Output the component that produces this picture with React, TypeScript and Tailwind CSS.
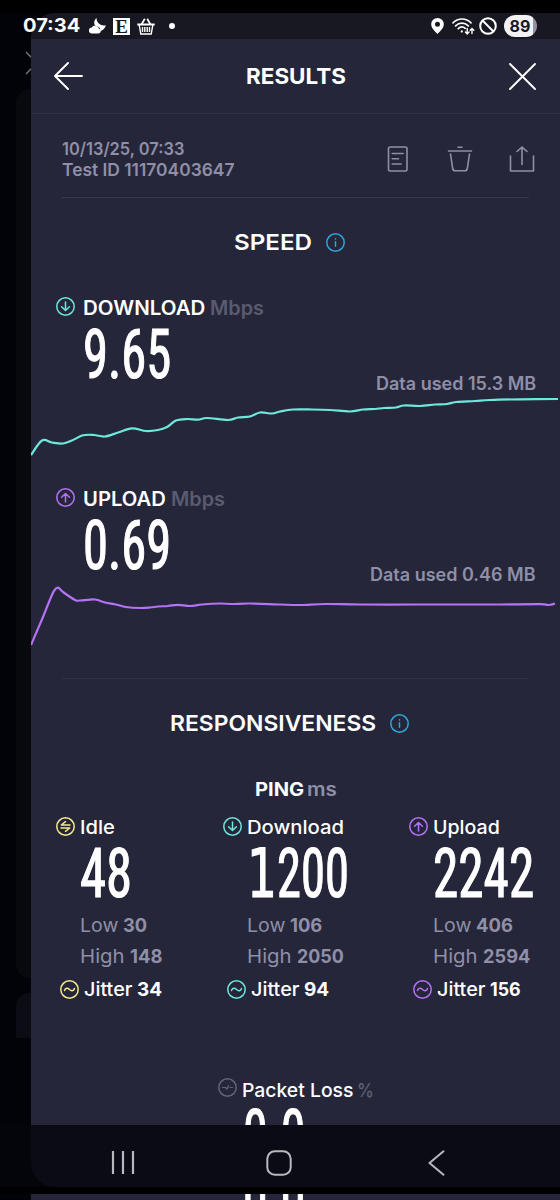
import { useLayoutEffect, useRef, type ReactNode } from 'react'

type Point = [number, number]

const downloadPoints: Point[] = [
  [31, 455], [42, 440.5], [52, 442.5], [63, 443.5], [72, 440.5], [83, 435.3], [94, 435], [105, 436.5],
  [118, 432.5], [132, 428.3], [146, 431], [158, 430], [167, 427], [176, 420.5], [187, 419], [198, 419.7],
  [207, 418], [228, 420], [238, 417.5], [250, 416.5], [260, 412.5], [272, 413.5], [280, 411.5],
  [293, 409.5], [312, 409.5], [330, 410], [350, 411.5], [363, 409.5], [375, 409], [384, 408],
  [396, 407.5], [404, 405.5], [420, 406], [435, 404.5], [447, 404], [456, 402], [475, 401],
  [490, 400], [520, 399.3], [558, 399],
]

const uploadPoints: Point[] = [
  [31, 645], [37, 631], [43, 617], [49, 602], [54, 590.8], [58, 587.7], [63, 592], [75, 600],
  [80, 600.5], [95, 599.5], [105, 602.5], [116, 604.5], [126, 607], [140, 608], [150, 607.5],
  [158, 606.5], [168, 606], [178, 604.8], [190, 606], [202, 604.5], [220, 603.5], [232, 604],
  [250, 603.5], [280, 604.5], [300, 605], [325, 604], [360, 604.5], [415, 604.5], [460, 604.5],
  [500, 604.5], [540, 604.2], [549, 605], [555, 603.5],
]

const pings = [
  {
    label: 'Idle', labelW: 'w-[35px]', value: '48', valueW: 'w-[52px]', color: '#f5ea8c', icon: 'idle',
    low: '30', lowW: 'w-[24px]', high: '148', highW: 'w-[32px]', jitter: '34', jitterW: 'w-[25px]',
  },
  {
    label: 'Download', labelW: 'w-[97px]', value: '1200', valueW: 'w-[102px]', color: '#6de8dc', icon: 'down',
    low: '106', lowW: 'w-[32px]', high: '2050', highW: 'w-[47px]', jitter: '94', jitterW: 'w-[25px]',
  },
  {
    label: 'Upload', labelW: 'w-[67px]', value: '2242', valueW: 'w-[101px]', color: '#b472f5', icon: 'up',
    low: '406', lowW: 'w-[37px]', high: '2594', highW: 'w-[47px]', jitter: '156', jitterW: 'w-[31px]',
  },
]

function smooth(points: Point[]) {
  let d = `M${points[0][0]} ${points[0][1]}`
  for (let i = 0; i < points.length - 1; i++) {
    const a = points[i - 1] ?? points[i]
    const b = points[i]
    const c = points[i + 1]
    const e = points[i + 2] ?? c
    d += `C${b[0] + (c[0] - a[0]) / 6} ${b[1] + (c[1] - a[1]) / 6} ${c[0] - (e[0] - b[0]) / 6} ${c[1] - (e[1] - b[1]) / 6} ${c[0]} ${c[1]}`
  }
  return d
}

// Stretches its text horizontally so it fills the width of the box
function Fit({ className, children }: { className: string; children: ReactNode }) {
  const box = useRef<HTMLSpanElement>(null)
  const text = useRef<HTMLSpanElement>(null)

  useLayoutEffect(() => {
    if (!box.current || !text.current) return
    text.current.style.transform = `scaleX(${box.current.clientWidth / text.current.offsetWidth})`
  }, [])

  return (
    <span ref={box} className={`block shrink-0 whitespace-nowrap ${className}`}>
      <span ref={text} className="inline-block origin-left">{children}</span>
    </span>
  )
}

function Big({ className, children }: { className: string; children: string }) {
  const rest = children.startsWith('1') ? children.slice(1) : children
  return (
    <Fit
      className={`h-14 font-[Roboto_Condensed,Roboto,sans-serif] text-[69px] leading-[58px] font-normal text-white [-webkit-text-stroke:1.2px_white] ${className}`}
    >
      {/* a leading 1 takes a face that draws its foot */}
      {rest !== children && <span className="font-[DejaVu_Sans,sans-serif] text-[67px] leading-[0]">1</span>}
      {rest}
    </Fit>
  )
}

function CircleIcon({ icon, color, className = '' }: { icon: string; color: string; className?: string }) {
  return (
    <svg
      className={`size-[19px] shrink-0 ${className}`}
      viewBox="0 0 19 19"
      fill="none"
      stroke={color}
      strokeWidth="1.5"
      strokeLinecap="round"
      strokeLinejoin="round"
    >
      <circle cx="9.5" cy="9.5" r="8.7" />
      {icon === 'down' && <path d="M9.5 5v8.3M5.6 9.8l3.9 3.7 3.9-3.7" />}
      {icon === 'up' && <path d="M9.5 14V5.7M5.6 9.2l3.9-3.7 3.9 3.7" />}
      {icon === 'idle' && <path d="M14 8H5.300l4.200-3.300M5 11h8.700l-4.200 3.300" />}
      {icon === 'wave' && <path d="M4.500 10.600c1-2.800 3.200-2.800 5-1.100s4 1.700 5-1.100" />}
      {icon === 'loss' && <path strokeWidth="1.2" d="M4.5 9.5h3l1.5 1.7 1.6-3.7M12 9.5h2.5" />}
      {icon === 'info' && <path d="M9.5 8.700v4.600M9.5 5.800v.2" />}
    </svg>
  )
}

function SectionTitle({ className, children }: { className: string; children: string }) {
  return (
    <div className="mr-[13px] flex h-[89px] items-center justify-center">
      <Fit className={`text-[22px] leading-[27px] font-semibold text-white ${className}`}>{children}</Fit>
      <CircleIcon icon="info" color="#2fa5dc" className="ml-[14px]" />
    </div>
  )
}

type SpeedProps = {
  label: string
  labelW: string
  value: string
  used: string
  usedW: string
  icon: string
  color: string
  points: Point[]
  viewBox: string
}

function Speed({ label, labelW, value, used, usedW, icon, color, points, viewBox }: SpeedProps) {
  return (
    <section>
      <div className="flex h-6 items-center pl-[25px] text-[19.5px] leading-6 font-semibold">
        <CircleIcon icon={icon} color={color} className="mb-1" />
        <Fit className={`ml-2 text-white ${labelW}`}>{label}</Fit>
        <Fit className="ml-[5px] w-[54px] text-[#5b5b70]">Mbps</Fit>
      </div>
      <Big className="mt-[6px] ml-[52px] w-[88px]">{value}</Big>
      <div className="-mt-2 flex h-5 justify-end pr-6 text-[18px] leading-5 font-semibold text-[#8f8fa8]">
        <Fit className={usedW}>{used}</Fit>
      </div>
      <svg className="block h-[66px] w-full" viewBox={viewBox} fill="none">
        <path d={smooth(points)} stroke={color} strokeWidth="2.2" strokeLinejoin="round" />
      </svg>
    </section>
  )
}

function StatusBar() {
  return (
    <div className="relative h-[26px] bg-[#020308]">
      <div className="absolute inset-y-0 right-0 left-[31px] rounded-tl-[24px] bg-[#171821]" />
      <div className="relative flex h-full items-center pr-[23px] pl-[23px] text-white">
        <Fit className="w-[57px] text-[19px] leading-6 font-bold">07:34</Fit>
        <svg className="ml-[9px] h-4 w-[17px]" viewBox="0 0 17 16" fill="currentColor">
          <path d="M7.500 0c0 2.800 1.300 5.300 3.600 6.500 2 1 4 1.300 5.900.8-1 3-3 5-5.700 6 .3-2.600-1.200-4.700-3.800-5.200C6 7.600 5.200 6.600 5.200 5c0-2 .9-3.900 2.300-5z" />
          <path d="M3 15.500a3 3 0 0 1-.2-6 3.900 3.900 0 0 1 7.200 1.300 2.400 2.400 0 0 1-.3 4.700z" />
        </svg>
        <span className="ml-[7px] flex size-[17px] items-center justify-center bg-white font-[Liberation_Serif,serif] text-[19px] leading-none font-bold text-[#171821]">
          E
        </span>
        <svg className="ml-[7px] h-[17px] w-[18px]" viewBox="0 0 18 17" fill="none" stroke="currentColor">
          <path d="M.3 6.500h17.400" strokeWidth="2" />
          <path d="M4.500 6.500 7.800.8M13.500 6.500 10.200.8" strokeWidth="1.700" />
          <path d="M2.200 7l1.600 9h10.400l1.600-9M5.500 9v5M7.800 9v5M10.200 9v5M12.500 9v5" strokeWidth="1.400" />
        </svg>
        <span className="ml-[14px] size-[6px] rounded-full bg-white" />

        <svg className="ml-auto h-4 w-[13px]" viewBox="0 0 13 16" fill="currentColor">
          <path fillRule="evenodd" d="M6.500 0A6.300 6.300 0 0 0 .2 6.300C.2 10 3.500 13 6.500 16c3-3 6.300-6 6.300-9.700A6.300 6.300 0 0 0 6.500 0zm0 3.800a2.500 2.500 0 1 1 0 5 2.500 2.500 0 0 1 0-5z" />
        </svg>
        <svg className="ml-2 h-[17px] w-[23px]" viewBox="0 0 23 17" fill="none" stroke="currentColor" strokeWidth="1.700" strokeLinecap="round">
          <path d="M1 4.800C6-.3 14-.3 19 4.800M3.600 7.800c3.700-3.600 9-3.600 12.700 0M6.300 10.700c2-2 4.800-2.100 6.900-.4" />
          <path d="M9.800 13.400v.2" strokeWidth="2.200" />
          <path d="M15.200 10.500v5.300m-1.800-1.700 1.800 1.800 1.800-1.800M20 15.500v-5m-1.800 1.700 1.800-1.800 1.800 1.800" strokeWidth="1.400" />
        </svg>
        <svg className="ml-1 size-[18px]" viewBox="0 0 18 18" fill="none" stroke="currentColor" strokeWidth="2">
          <circle cx="9" cy="9" r="7.800" />
          <path d="m3.500 3.500 11 11" />
        </svg>
        <span className="ml-[7px] flex h-[22px] w-[33px] items-center rounded-full bg-linear-to-r from-[#f2f2f5] from-88% to-[#9293a0] to-88% pl-[5.500px] font-bold text-[#171821]">
          <Fit className="w-[21px] text-[16px] leading-5">89</Fit>
        </span>
      </div>
    </div>
  )
}

export default function App() {
  return (
    <main className="flex h-[1200px] w-[560px] flex-col overflow-hidden bg-black pt-[13px] font-[Inter,sans-serif]">
      <StatusBar />

      <div className="flex h-[1086px] overflow-hidden">
        {/* previous screen showing behind the panel */}
        <aside className="w-[31px] shrink-0 overflow-hidden bg-[#020308] pl-4">
          <svg className="mt-3 ml-[10px] h-[24px] w-[5px]" viewBox="0 0 5 24" fill="none" stroke="#77777d" strokeWidth="1.300">
            <path d="M0 1l6 6M0 23l6-6" />
          </svg>
          <div className="mt-[14px] h-[889px] w-10 rounded-l-[14px] bg-[#08090d]" />
          <div className="mt-[15px] h-[45px] w-10 rounded-tl-[14px] bg-[#0c0c14]" />
        </aside>

        <div className="w-[529px] shrink-0 bg-[#252639]">
          <header className="flex h-[75px] items-center justify-between border-b border-[#303145] pr-[24px] pl-[23px] text-white">
            <svg className="h-[28px] w-[29px]" viewBox="0 0 29 28" fill="none" stroke="currentColor" strokeWidth="1.900" strokeLinecap="round" strokeLinejoin="round">
              <path d="M28 14H1M14 1 1 14l13 13" />
            </svg>
            <Fit className="w-[100px] text-[22px] leading-[29px] font-bold">RESULTS</Fit>
            <svg className="size-[27px]" viewBox="0 0 27 27" fill="none" stroke="currentColor" strokeWidth="1.900" strokeLinecap="round">
              <path d="m1 1 25 25M26 1 1 26" />
            </svg>
          </header>

          <div className="mr-[31px] ml-[31px] flex h-[84px] items-center border-b border-[#37384d] pt-[7px] text-[#8f8fa8]">
            <div className="text-[17.500px] leading-[21px] font-semibold">
              <Fit className="w-[122px]">10/13/25, 07:33</Fit>
              <Fit className="w-[172px]">Test ID 11170403647</Fit>
            </div>
            <div className="-mr-[6px] ml-auto flex items-center">
              <svg className="h-[26px] w-[22px]" viewBox="0 0 22 26" fill="none" stroke="currentColor" strokeWidth="1.600" strokeLinecap="round">
                <rect x="1.500" y="1" width="18.500" height="24" rx="1.500" />
                <path d="M5.200 7.500h11M5.200 12.800h6.300M5.200 18h9" />
              </svg>
              <svg className="ml-[38px] h-[26px] w-[26px]" viewBox="0 0 26 26" fill="none" stroke="currentColor" strokeWidth="1.600" strokeLinecap="round">
                <path d="M1.500 5h23M11 1.200h4M3.500 8l2.200 14.500c.3 1.700 1 2.300 2.500 2.300h9.600c1.500 0 2.200-.6 2.500-2.300L22.500 8" />
              </svg>
              <svg className="ml-[36px] h-[26px] w-[26px]" viewBox="0 0 26 26" fill="none" stroke="currentColor" strokeWidth="1.600" strokeLinecap="round" strokeLinejoin="round">
                <path d="M1.500 10v15h23V10M13 18.500V1.200M8 5.500l5-4.300 5 4.300" />
              </svg>
            </div>
          </div>

          <SectionTitle className="w-[78px]">SPEED</SectionTitle>
          <div className="mt-[9px] flex flex-col gap-[27px]">
            <Speed
              label="DOWNLOAD"
              labelW="w-[122px]"
              value="9.65"
              used="Data used 15.3 MB"
              usedW="w-[160px]"
              icon="down"
              color="#6de8dc"
              points={downloadPoints}
              viewBox="31 394 529 66"
            />
            <Speed
              label="UPLOAD"
              labelW="w-[83px]"
              value="0.69"
              used="Data used 0.46 MB"
              usedW="w-[166px]"
              icon="up"
              color="#b472f5"
              points={uploadPoints}
              viewBox="31 585 529 66"
            />
          </div>

          <div className="mx-[31px] mt-[27px] h-px bg-[#303145]" />
          <SectionTitle className="w-[206px]">RESPONSIVENESS</SectionTitle>

          <div className="mt-[11px] flex h-5 justify-center gap-[3px] text-[18.500px] leading-5 font-bold">
            <Fit className="w-[49px] text-white">PING</Fit>
            <Fit className="w-[30px] font-semibold text-[#8f8fa8]">ms</Fit>
          </div>

          <div className="mt-[17px] grid grid-cols-[167px_186px_1fr] pl-[25px] text-[19px] leading-[22px] text-[#8f8fa8]">
            {pings.map((p) => (
              <div key={p.label}>
                <div className="flex h-6 items-center font-medium text-white">
                  <CircleIcon icon={p.icon} color={p.color} className="mb-1" />
                  <Fit className={`ml-[5px] ${p.labelW}`}>{p.label}</Fit>
                </div>
                <Big className={`mt-[5px] ml-6 ${p.valueW}`}>{p.value}</Big>
                <div className="mt-[14px] ml-6 flex h-5 gap-[5px]">
                  <Fit className="w-[38px]">Low</Fit>
                  <Fit className={`font-bold ${p.lowW}`}>{p.low}</Fit>
                </div>
                <div className="mt-[11px] ml-6 flex h-5 gap-[5px]">
                  <Fit className="w-[45px]">High</Fit>
                  <Fit className={`font-bold ${p.highW}`}>{p.high}</Fit>
                </div>
                <div className="mt-[13px] ml-1 flex h-5 items-center font-medium text-white">
                  <CircleIcon icon="wave" color={p.color} />
                  <Fit className="ml-[5px] w-[48px] pt-[2px]">Jitter</Fit>
                  <Fit className={`ml-[5px] pt-[2px] font-bold ${p.jitterW}`}>{p.jitter}</Fit>
                </div>
              </div>
            ))}
          </div>

          <div className="mt-[79px] flex h-6 items-center pl-[187px] text-[19px] leading-[25px] font-medium text-white">
            <CircleIcon icon="loss" color="#63647a" className="mb-[5px]" />
            <Fit className="ml-[5px] w-[111px]">Packet Loss</Fit>
            <Fit className="ml-1 w-[17px] text-[#5f6076]">%</Fit>
          </div>
          <Big className="mt-[4px] ml-[212px] w-[62px]">0.0</Big>
        </div>
      </div>

      <nav className="flex h-[62px] shrink-0 bg-[#04050b] pl-[31px] text-[#b9b9bd]">
        <div className="flex w-full items-center rounded-bl-[24px] bg-[#0a0b14] pt-[13px] pb-0">
          <svg className="ml-[80px] h-[25px] w-[24px]" viewBox="0 0 24 25" stroke="currentColor" strokeWidth="2.200">
            <path d="M2 1v23M12 1v23M22 1v23" />
          </svg>
          <svg className="ml-[131px] h-[26px] w-[26px]" viewBox="0 0 26 26" fill="none" stroke="currentColor" strokeWidth="2">
            <rect x="1.300" y="1.300" width="23.400" height="23.400" rx="7.500" />
          </svg>
          <svg className="ml-[136px] h-[26px] w-[17px]" viewBox="0 0 17 26" fill="none" stroke="currentColor" strokeWidth="2" strokeLinecap="round" strokeLinejoin="round">
            <path d="M15.500 1.300 1.500 13l14 11.700" />
          </svg>
        </div>
      </nav>

      {/* sliver of the panel under the navigation bar */}
      <div className="mt-[7px] flex h-[6px] shrink-0 overflow-hidden bg-[#020308] pl-[31px]">
        <div className="w-full bg-[#252639]">
          <Big className="-mt-[24px] ml-[212px] w-[62px]">0.0</Big>
        </div>
      </div>
    </main>
  )
}
